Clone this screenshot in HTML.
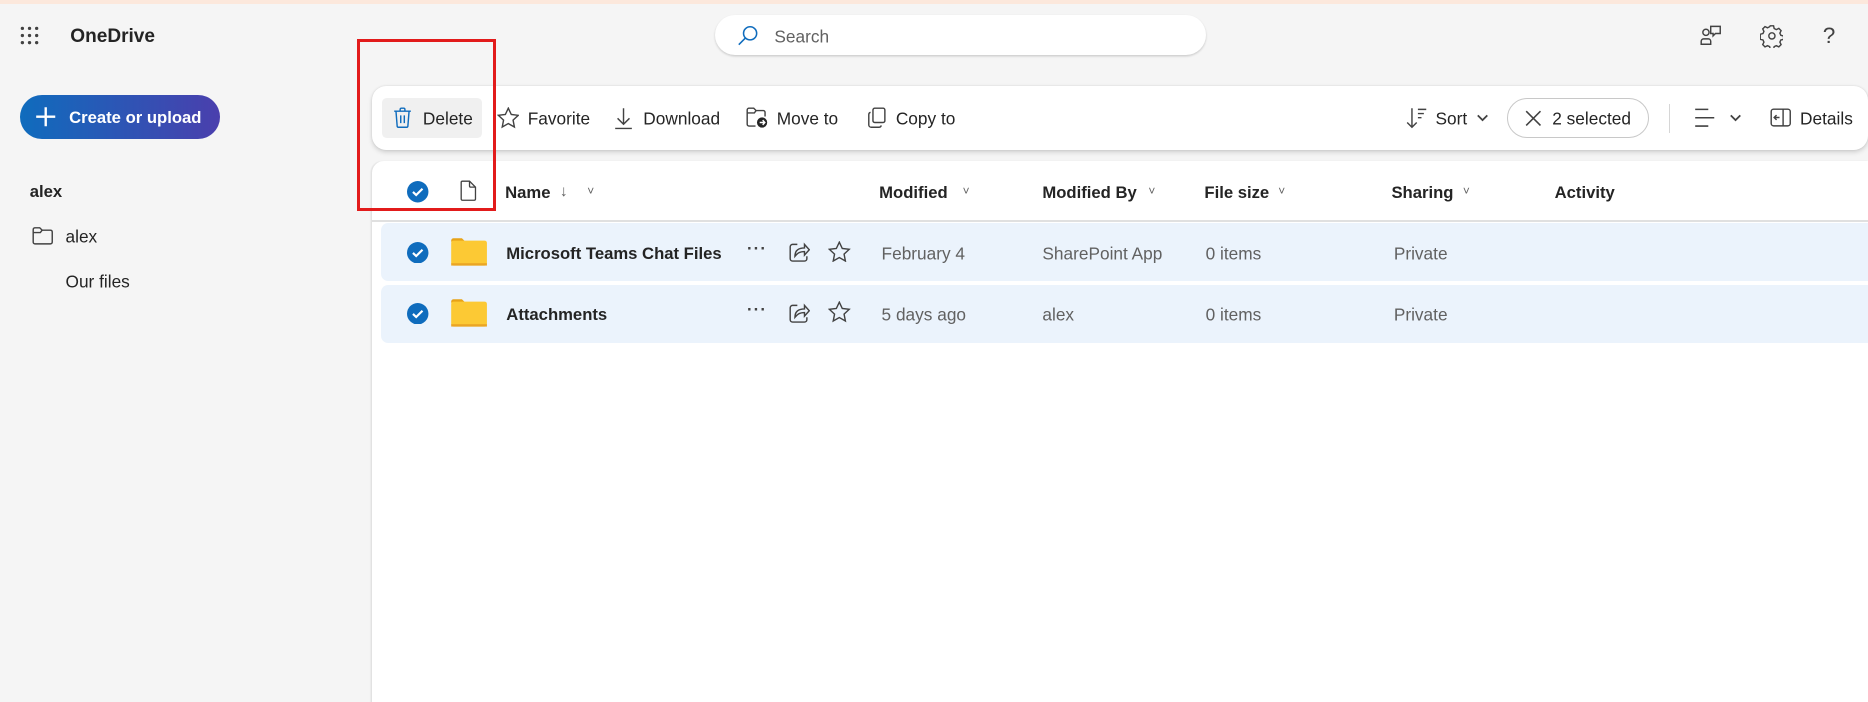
<!DOCTYPE html>
<html><head><meta charset="utf-8">
<style>
*{box-sizing:border-box;margin:0;padding:0}
html,body{width:1868px;height:702px;overflow:hidden;background:#f5f5f5}
#w{zoom:1.1913;width:1568px;height:590px;position:relative;font-family:"Liberation Sans",sans-serif;color:#242424;font-size:14.5px;background:#f5f5f5}
.a{position:absolute;white-space:nowrap}
.c{transform:translateY(-50%)}
svg{display:block}
.b{font-weight:bold;font-size:14px}
.g{color:#616161}
</style></head><body><div id="w">
<div class="a" style="left:0;top:0;width:1568px;height:3px;background:#fce8dc"></div>
<svg class="a" style="left:17px;top:22px" width="16" height="16" viewBox="0 0 16 16" fill="#424242">
<circle cx="2" cy="2" r="1.4"/><circle cx="8" cy="2" r="1.4"/><circle cx="14" cy="2" r="1.4"/>
<circle cx="2" cy="8" r="1.4"/><circle cx="8" cy="8" r="1.4"/><circle cx="14" cy="8" r="1.4"/>
<circle cx="2" cy="14" r="1.4"/><circle cx="8" cy="14" r="1.4"/><circle cx="14" cy="14" r="1.4"/></svg>
<div class="a c b" style="left:59px;top:31px;font-size:16px">OneDrive</div>
<div class="a" style="left:600px;top:13px;width:412px;height:33px;background:#fff;border-radius:17px;box-shadow:0 1px 2px rgba(0,0,0,.18)"></div>
<svg class="a" style="left:619px;top:21px" width="18" height="18" viewBox="0 0 18 18" fill="none" stroke="#0f6cbd" stroke-width="1.3"><circle cx="11" cy="7" r="5.5"/><path d="M7 11L1.5 16.5"/></svg>
<div class="a c g" style="left:650px;top:31px">Search</div>
<svg class="a" style="left:1427px;top:20px" width="20" height="20" viewBox="0 0 20 20" fill="none" stroke="#424242" stroke-width="1.2"><circle cx="5" cy="7" r="2.6"/><path d="M1 17v-2.5a2 2 0 012-2h4a2 2 0 012 2V17z"/><path d="M9 2h8v6h-4l-2 2v-2H9z"/></svg>
<svg class="a" style="left:1477px;top:20px" width="20" height="20" viewBox="0 0 20 20" fill="none" stroke="#424242" stroke-width="1.2"><circle cx="10" cy="10" r="2.6"/><path d="M8.6 1.5h2.8l.5 2.3 1.8.9 2.1-1 1.9 1.9-1 2.1.8 1.8 2.3.6v2.8l-2.3.5-.8 1.8 1 2.1-1.9 1.9-2.1-1-1.8.8-.5 2.3H8.6l-.5-2.3-1.8-.8-2.1 1-1.9-1.9 1-2.1-.8-1.8-2.3-.5V8.6l2.3-.6.8-1.8-1-2.1 1.9-1.9 2.1 1 1.8-.9z"/></svg>
<div class="a c" style="left:1530px;top:30px;font-size:19px;color:#424242">?</div>
<div class="a" style="left:17px;top:80px;width:168px;height:37px;border-radius:19px;background:linear-gradient(90deg,#0f6cbd,#4a3fad)"></div>
<svg class="a" style="left:29px;top:89px" width="18" height="18" viewBox="0 0 18 18" stroke="#fff" stroke-width="2"><path d="M9 1v16M1 9h16"/></svg>
<div class="a c b" style="left:58px;top:99px;color:#fff;font-size:14px">Create or upload</div>
<div class="a c b" style="left:25px;top:161px">alex</div>
<svg class="a" style="left:27px;top:190px" width="18" height="16" viewBox="0 0 18 16" fill="none" stroke="#424242" stroke-width="1.2"><path d="M1 3a1.5 1.5 0 011.5-1.5h4l2 2h7A1.5 1.5 0 0117 5v8.5a1.5 1.5 0 01-1.5 1.5h-13A1.5 1.5 0 011 13.5z"/><path d="M1 5.5h6l1.5-2"/></svg>
<div class="a c" style="left:55px;top:199px">alex</div>
<div class="a c" style="left:55px;top:237px">Our files</div>
<div class="a" style="left:312px;top:135px;width:1256px;height:455px;background:#fff;border-radius:10px 0 0 0;box-shadow:-1px 0 1px rgba(0,0,0,.08)"></div>
<div class="a" style="left:312px;top:72px;width:1256px;height:54px;background:#fff;border-radius:12px;box-shadow:0 2px 4px rgba(0,0,0,.14),0 0 2px rgba(0,0,0,.1)"></div>
<div class="a" style="left:321px;top:82px;width:84px;height:34px;background:#f0f0f0;border-radius:4px"></div>
<svg class="a" style="left:330px;top:90px" width="16" height="18" viewBox="0 0 16 18" fill="none" stroke="#0f6cbd" stroke-width="1.2"><path d="M1 3.5h14M6 3.5V2a1 1 0 011-1h2a1 1 0 011 1v1.5M2.5 3.5l1 12.5a1 1 0 001 1h7a1 1 0 001-1l1-12.5M6.5 7v6.5M9.5 7v6.5"/></svg>
<div class="a c" style="left:355px;top:100px">Delete</div>
<svg class="a" style="left:417px;top:90px" width="19" height="18" viewBox="0 0 19 18" fill="none" stroke="#424242" stroke-width="1.2"><path d="M9.5 1l2.5 5.3 5.8.7-4.3 4 1.1 5.8-5.1-2.9-5.1 2.9 1.1-5.8-4.3-4 5.8-.7z"/></svg>
<div class="a c" style="left:443px;top:100px">Favorite</div>
<svg class="a" style="left:515px;top:90px" width="16" height="19" viewBox="0 0 16 19" fill="none" stroke="#424242" stroke-width="1.2"><path d="M8 1v13M3 9.5l5 5 5-5M1 18h14"/></svg>
<div class="a c" style="left:540px;top:100px">Download</div>
<svg class="a" style="left:626px;top:90px" width="19" height="18" viewBox="0 0 19 18" fill="none" stroke="#424242" stroke-width="1.2"><path d="M8 16H2.5A1.5 1.5 0 011 14.5v-12A1.5 1.5 0 012.5 1h4l2 2h6A1.5 1.5 0 0116 4.5V8"/><path d="M1 5h6l1.5-2"/><circle cx="13.5" cy="13" r="4.3" fill="#242424" stroke="none"/><path d="M11.5 13h4M14 11l1.8 2-1.8 2" stroke="#fff"/></svg>
<div class="a c" style="left:652px;top:100px">Move to</div>
<svg class="a" style="left:728px;top:90px" width="17" height="18" viewBox="0 0 17 18" fill="none" stroke="#424242" stroke-width="1.2"><rect x="5" y="1" width="10" height="12" rx="1.5"/><path d="M3 4.5A2 2 0 001.5 6.5V15a2 2 0 002 2H10a2 2 0 002-1.5"/></svg>
<div class="a c" style="left:752px;top:100px">Copy to</div>
<svg class="a" style="left:1180px;top:90px" width="18" height="18" viewBox="0 0 18 18" fill="none" stroke="#424242" stroke-width="1.2"><path d="M5 1v16M1 13l4 4 4-4M10 2h7M10 5.5h5M10 9h3"/></svg>
<div class="a c" style="left:1205px;top:100px">Sort</div>
<svg class="a" style="left:1239px;top:95px" width="11" height="8" viewBox="0 0 11 8" fill="none" stroke="#424242" stroke-width="1.5"><path d="M1.5 2l4 4 4-4"/></svg>
<div class="a" style="left:1265px;top:82px;width:119px;height:34px;border:1px solid #c8c8c8;border-radius:17px"></div>
<svg class="a" style="left:1280px;top:92px" width="14" height="14" viewBox="0 0 14 14" stroke="#424242" stroke-width="1.3"><path d="M1 1l12 12M13 1L1 13"/></svg>
<div class="a c" style="left:1303px;top:100px">2 selected</div>
<div class="a" style="left:1401px;top:87px;width:1px;height:25px;background:#d6d6d6"></div>
<svg class="a" style="left:1422px;top:90px" width="18" height="18" viewBox="0 0 18 18" stroke="#424242" stroke-width="1.3"><path d="M1 2h11M1 9h16M1 16h11"/></svg>
<svg class="a" style="left:1451px;top:95px" width="11" height="8" viewBox="0 0 11 8" fill="none" stroke="#424242" stroke-width="1.5"><path d="M1.5 2l4 4 4-4"/></svg>
<svg class="a" style="left:1486px;top:91px" width="18" height="16" viewBox="0 0 18 16" fill="none" stroke="#424242" stroke-width="1.2"><rect x="1" y="1" width="16" height="14" rx="2"/><path d="M11 1v14M8 8H3.5M5.5 6L3.5 8l2 2"/></svg>
<div class="a c" style="left:1511px;top:100px">Details</div>
<div class="a" style="left:300px;top:33px;width:116px;height:144px;border:3px solid #e21b1b"></div>
<svg class="a" style="left:342px;top:152px" width="18" height="18" viewBox="0 0 18 18"><circle cx="9" cy="9" r="9" fill="#0f6cbd"/><path d="M5 9.2l2.7 2.6L13 6.5" fill="none" stroke="#fff" stroke-width="1.8"/></svg>
<svg class="a" style="left:386px;top:151px" width="14" height="18" viewBox="0 0 14 18" fill="none" stroke="#424242" stroke-width="1.1"><path d="M1 2a1 1 0 011-1h6l5 5v10a1 1 0 01-1 1H2a1 1 0 01-1-1z"/><path d="M8 1v4a1 1 0 001 1h4"/></svg>
<div class="a c b" style="left:424px;top:162px">Name</div>
<div class="a c g" style="left:470px;top:161px;font-size:13px">↓</div>
<div class="a c g" style="left:493px;top:160px;font-size:10px">˅</div>
<div class="a c b" style="left:738px;top:162px">Modified</div>
<div class="a c g" style="left:808px;top:160px;font-size:10px">˅</div>
<div class="a c b" style="left:875px;top:162px">Modified By</div>
<div class="a c g" style="left:964px;top:160px;font-size:10px">˅</div>
<div class="a c b" style="left:1011px;top:162px">File size</div>
<div class="a c g" style="left:1073px;top:160px;font-size:10px">˅</div>
<div class="a c b" style="left:1168px;top:162px">Sharing</div>
<div class="a c g" style="left:1228px;top:160px;font-size:10px">˅</div>
<div class="a c b" style="left:1305px;top:162px">Activity</div>
<div class="a" style="left:312px;top:185px;width:1256px;height:1px;background:#e0e0e0"></div>
<div class="a" style="left:320px;top:187px;width:1248px;height:49px;background:#ebf3fc;border-radius:6px 0 0 6px"></div>
<div class="a" style="left:320px;top:239px;width:1248px;height:49px;background:#ebf3fc;border-radius:6px 0 0 6px"></div>
<svg class="a" style="left:342px;top:203px" width="18" height="18" viewBox="0 0 18 18"><circle cx="9" cy="9" r="9" fill="#0f6cbd"/><path d="M5 9.2l2.7 2.6L13 6.5" fill="none" stroke="#fff" stroke-width="1.8"/></svg>
<svg class="a" style="left:378px;top:199px" width="32" height="26" viewBox="0 0 32 26"><path d="M1 3a2 2 0 012-2h7l3 3h-12z" fill="#e8a317"/><rect x="1" y="3" width="30" height="21" rx="2" fill="#fcc934"/><rect x="1" y="22" width="30" height="2" fill="#eaa524"/></svg>
<div class="a c b" style="left:425px;top:213px">Microsoft Teams Chat Files</div>
<div class="a c" style="left:627px;top:209px;font-size:14px;letter-spacing:1px;font-weight:bold;color:#424242">···</div>
<svg class="a" style="left:662px;top:203px" width="18" height="17" viewBox="0 0 18 17" fill="none" stroke="#424242" stroke-width="1.2"><path d="M7 2H3a2 2 0 00-2 2v10a2 2 0 002 2h10a2 2 0 002-2v-2"/><path d="M5 12c0-5 3-7 8-7V2l4 4.5L13 11V8c-4 0-6 1.5-8 4z"/></svg>
<svg class="a" style="left:695px;top:202px" width="19" height="18" viewBox="0 0 19 18" fill="none" stroke="#424242" stroke-width="1.2"><path d="M9.5 1l2.5 5.3 5.8.7-4.3 4 1.1 5.8-5.1-2.9-5.1 2.9 1.1-5.8-4.3-4 5.8-.7z"/></svg>
<div class="a c g" style="left:740px;top:213px">February 4</div>
<div class="a c g" style="left:875px;top:213px">SharePoint App</div>
<div class="a c g" style="left:1012px;top:213px">0 items</div>
<div class="a c g" style="left:1170px;top:213px">Private</div>
<svg class="a" style="left:342px;top:254px" width="18" height="18" viewBox="0 0 18 18"><circle cx="9" cy="9" r="9" fill="#0f6cbd"/><path d="M5 9.2l2.7 2.6L13 6.5" fill="none" stroke="#fff" stroke-width="1.8"/></svg>
<svg class="a" style="left:378px;top:250px" width="32" height="26" viewBox="0 0 32 26"><path d="M1 3a2 2 0 012-2h7l3 3h-12z" fill="#e8a317"/><rect x="1" y="3" width="30" height="21" rx="2" fill="#fcc934"/><rect x="1" y="22" width="30" height="2" fill="#eaa524"/></svg>
<div class="a c b" style="left:425px;top:264px">Attachments</div>
<div class="a c" style="left:627px;top:260px;font-size:14px;letter-spacing:1px;font-weight:bold;color:#424242">···</div>
<svg class="a" style="left:662px;top:254px" width="18" height="17" viewBox="0 0 18 17" fill="none" stroke="#424242" stroke-width="1.2"><path d="M7 2H3a2 2 0 00-2 2v10a2 2 0 002 2h10a2 2 0 002-2v-2"/><path d="M5 12c0-5 3-7 8-7V2l4 4.5L13 11V8c-4 0-6 1.5-8 4z"/></svg>
<svg class="a" style="left:695px;top:253px" width="19" height="18" viewBox="0 0 19 18" fill="none" stroke="#424242" stroke-width="1.2"><path d="M9.5 1l2.5 5.3 5.8.7-4.3 4 1.1 5.8-5.1-2.9-5.1 2.9 1.1-5.8-4.3-4 5.8-.7z"/></svg>
<div class="a c g" style="left:740px;top:264px">5 days ago</div>
<div class="a c g" style="left:875px;top:264px">alex</div>
<div class="a c g" style="left:1012px;top:264px">0 items</div>
<div class="a c g" style="left:1170px;top:264px">Private</div>
</div></body></html>
